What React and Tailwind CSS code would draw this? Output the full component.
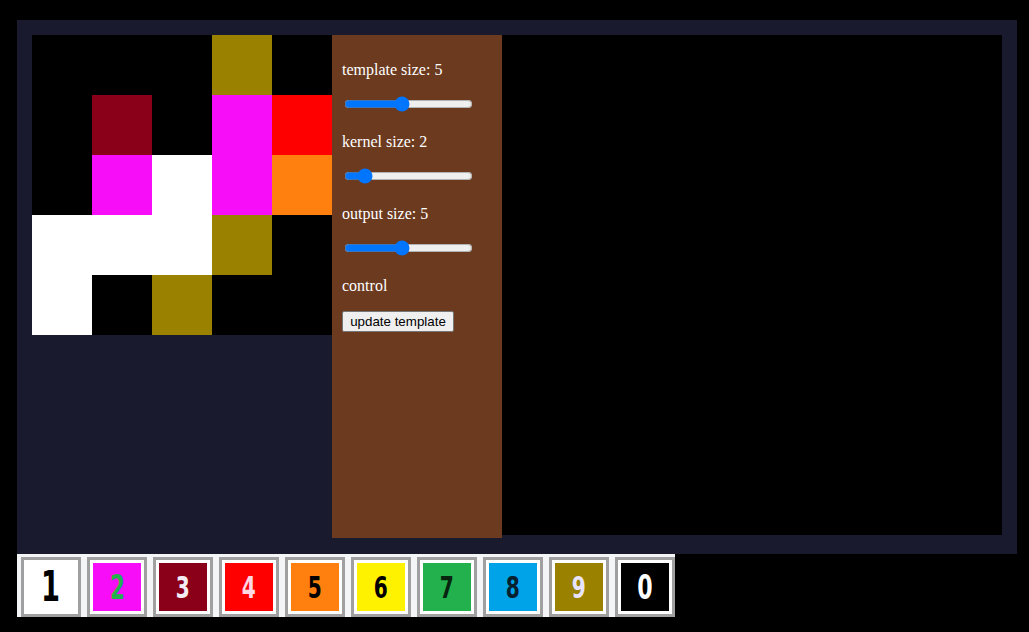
const GRID = [
  ["#000000", "#000000", "#000000", "#9a8200", "#000000"],
  ["#000000", "#8b0019", "#000000", "#f70df7", "#ff0000"],
  ["#000000", "#f70df7", "#ffffff", "#f70df7", "#ff800f"],
  ["#ffffff", "#ffffff", "#ffffff", "#9a8200", "#000000"],
  ["#ffffff", "#000000", "#9a8200", "#000000", "#000000"],
];

const PALETTE = [
  { digit: "1", bg: "bg-white", fg: "text-black", size: "text-[42px]" },
  { digit: "2", bg: "bg-[#f70df7]", fg: "text-[#22b14c]", size: "text-[33px]" },
  { digit: "3", bg: "bg-[#8b0019]", fg: "text-[#f4eef4]", size: "text-[31px]" },
  { digit: "4", bg: "bg-[#ff0000]", fg: "text-[#ffd6e4]", size: "text-[31px]" },
  { digit: "5", bg: "bg-[#ff800f]", fg: "text-black", size: "text-[31px]" },
  { digit: "6", bg: "bg-[#fff200]", fg: "text-black", size: "text-[31px]" },
  { digit: "7", bg: "bg-[#22b14c]", fg: "text-[#07240f]", size: "text-[31px]" },
  { digit: "8", bg: "bg-[#00a2e8]", fg: "text-[#06202e]", size: "text-[31px]" },
  { digit: "9", bg: "bg-[#9a8200]", fg: "text-[#e8e4ff]", size: "text-[31px]" },
  { digit: "0", bg: "bg-black", fg: "text-white", size: "text-[34px]" },
];

const Slider = ({ value }) => (
  <input
    type="range"
    min={1}
    max={10}
    defaultValue={value}
    className="mt-[17px] ml-[2px] block h-[16px] w-[129px]"
  />
);

const Label = ({ children, className = "" }) => (
  <div className={`h-[18px] text-[16px] leading-[18px] text-white ${className}`}>{children}</div>
);

export default function App() {
  return (
    <div className="min-h-[632px] bg-black pl-[17px] pt-[20px] font-['Liberation_Serif',serif]">
      <div className="flex w-[1000px] items-start bg-[#1a1a2e] px-[15px] pb-[16px] pt-[15px]">
        <div className="grid w-[300px] grid-cols-5">
          {GRID.flat().map((color, i) => (
            <div key={i} className="h-[60px] w-[60px]" style={{ backgroundColor: color }} />
          ))}
        </div>
        <div className="flex h-[503px] w-[170px] flex-col bg-[#6b3a1f] px-[10px] pt-[26px]">
          <Label>template size: 5</Label>
          <Slider value={5} />
          <Label className="mt-[21px]">kernel size: 2</Label>
          <Slider value={2} />
          <Label className="mt-[21px]">output size: 5</Label>
          <Slider value={5} />
          <Label className="mt-[21px]">control</Label>
          <div className="mt-[16px] flex">
            <button className="h-[21px] w-[112px] rounded-[2px] border border-[#767676] bg-[#efefef] font-['Liberation_Sans',sans-serif] text-[13.33px] leading-[19px] text-black">
              update template
            </button>
          </div>
        </div>
        <div className="h-[500px] w-[500px] bg-black" />
      </div>
      <div className="flex w-[658px] gap-[6px] bg-[#f4f5f6] pl-[4px] pt-[3px]">
        {PALETTE.map((p) => (
          <div key={p.digit} className="border-[3px] border-[#a0a0a0] bg-white p-[3px]">
            <div className={`flex h-[48px] w-[48px] items-center justify-center ${p.bg}`}>
              <span
                className={`scale-x-[0.65] font-['DejaVu_Sans',sans-serif] font-bold leading-none ${p.fg} ${p.size}`}
              >
                {p.digit}
              </span>
            </div>
          </div>
        ))}
      </div>
    </div>
  );
}
